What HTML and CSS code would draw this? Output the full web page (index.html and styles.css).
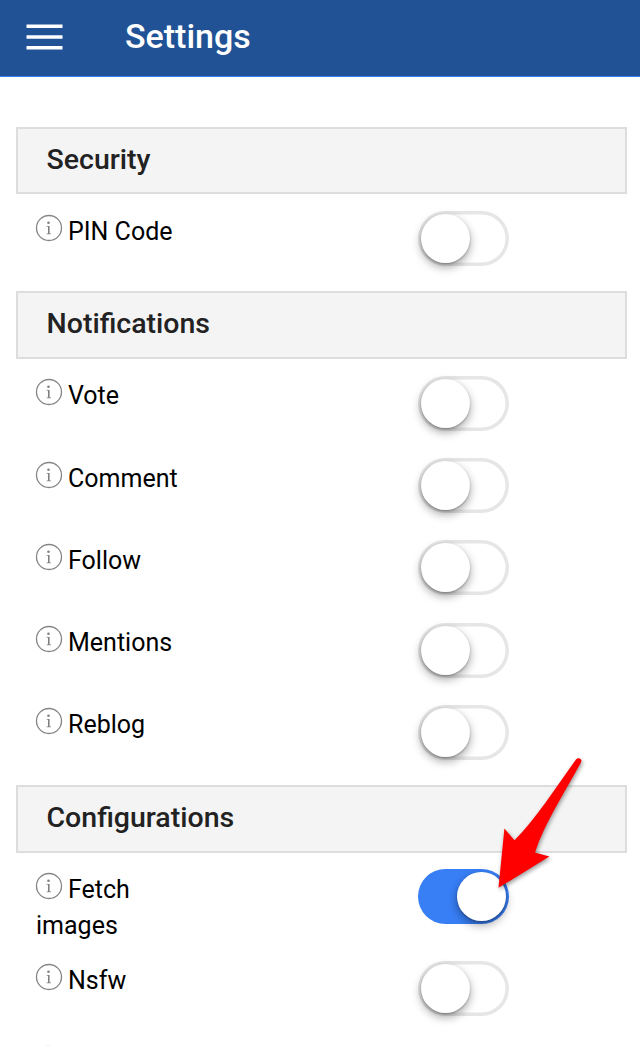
FILE: index.html
```html
<!DOCTYPE html>
<html lang="en">
<head>
<meta charset="utf-8">
<title>Settings</title>
<link rel="stylesheet" href="styles.css">
</head>
<body>
<svg class="defs" width="0" height="0" aria-hidden="true">
  <symbol id="info" viewBox="0 0 28 28">
    <circle cx="14" cy="14" r="12.5" fill="none" stroke="#858585" stroke-width="1.3"/>
    <circle cx="13.5" cy="8.8" r="1.3" fill="#808080"/>
    <path d="M11.6 12.4h2.2M11.6 19.8h4.4" fill="none" stroke="#888" stroke-width=".8"/>
    <path d="M13.8 12.1v7.8" fill="none" stroke="#808080" stroke-width="1.6"/>
  </symbol>
</svg>
<header class="bar">
  <svg class="menu" viewBox="0 0 37 26"><path d="M.5 2.3h36M.5 13h36M.5 23.7h36" stroke="#fff" stroke-width="3.5"/></svg>
  <h1 class="title">Settings</h1>
</header>
<main class="content">
  <h2 class="section">Security</h2>
  <div class="row"><div class="label"><svg class="info"><use href="#info"/></svg>PIN Code</div><span class="toggle"></span></div>
  <h2 class="section">Notifications</h2>
  <div class="row"><div class="label"><svg class="info"><use href="#info"/></svg>Vote</div><span class="toggle"></span></div>
  <div class="row"><div class="label"><svg class="info"><use href="#info"/></svg>Comment</div><span class="toggle"></span></div>
  <div class="row"><div class="label"><svg class="info"><use href="#info"/></svg>Follow</div><span class="toggle"></span></div>
  <div class="row"><div class="label"><svg class="info"><use href="#info"/></svg>Mentions</div><span class="toggle"></span></div>
  <div class="row"><div class="label"><svg class="info"><use href="#info"/></svg>Reblog</div><span class="toggle"></span></div>
  <h2 class="section">Configurations</h2>
  <div class="row row-tall"><div class="label"><svg class="info"><use href="#info"/></svg>Fetch<br>images</div><span class="toggle on"></span></div>
  <div class="row"><div class="label"><svg class="info"><use href="#info"/></svg>Nsfw</div><span class="toggle"></span></div>
  <div class="row-cut"></div>
</main>
<svg class="arrow" viewBox="0 0 100 150">
  <path d="M8.5 142.8L14.4 83.6L24.5 95.2C46 74 66 42 86 14.5C88.5 11.5 92.8 14 91 17.5C75 47 55 77 45 107.5L59.4 111.6Z" fill="#f00"/>
</svg>
</body>
</html>
```
FILE: styles.css
```css
* { box-sizing: border-box; }
html, body { margin: 0; height: 1046px; overflow: hidden; }
body { position: relative; background: #fff; color: #000; font-family: Roboto, sans-serif; }
.defs { position: absolute; }
.bar { display: flex; align-items: center; height: 77px; padding: 0 0 2px 26px; background: #205295; border-bottom: 1px solid #387ef5; }
.menu { width: 37px; height: 26px; }
.title { margin: -2px 0 0 62px; font-size: 34px; line-height: 40px; font-weight: 500; color: #fff; }
.content { display: flex; flex-direction: column; height: 969px; padding: 34.7px 13px 0 16px; }
.section { flex: none; margin: 15px 0 0; height: 67.6px; padding: 0 28.5px; border: 2px solid #ddd; background: #f4f4f4; color: #222; font-size: 28.5px; line-height: 62.6px; font-weight: 500; }
.row { flex: none; display: flex; align-items: flex-start; height: 82.2px; padding: 16.9px 0 0 20px; }
.row-tall { height: 91.3px; }
.label { width: 382px; font-size: 25px; line-height: 36px; padding-top: 2.5px; }
.info { width: 28px; height: 28px; margin: 0 5px 0 -1px; vertical-align: -2px; }
.row-cut { width: 4px; height: 1px; margin: auto 0 0 30px; background: #f0f0f0; }
.toggle { display: block; width: 91px; height: 55px; padding: 3px; border-radius: 28px; background: #fff; box-shadow: inset 0 0 0 3.5px #e6e6e6; }
.toggle::before { content: ""; display: block; width: 49px; height: 49px; border-radius: 50%; background: #fff; box-shadow: 0 4px 10px rgba(0,0,0,.36), 0 1px 2px rgba(0,0,0,.25); }
.toggle.on { background: #387ef5; box-shadow: none; }
.toggle.on::before { margin-left: 36px; }
.arrow { position: absolute; left: 490px; top: 745px; width: 100px; height: 150px; filter: drop-shadow(1px 2px 2px rgba(0,0,0,.4)); }
```
